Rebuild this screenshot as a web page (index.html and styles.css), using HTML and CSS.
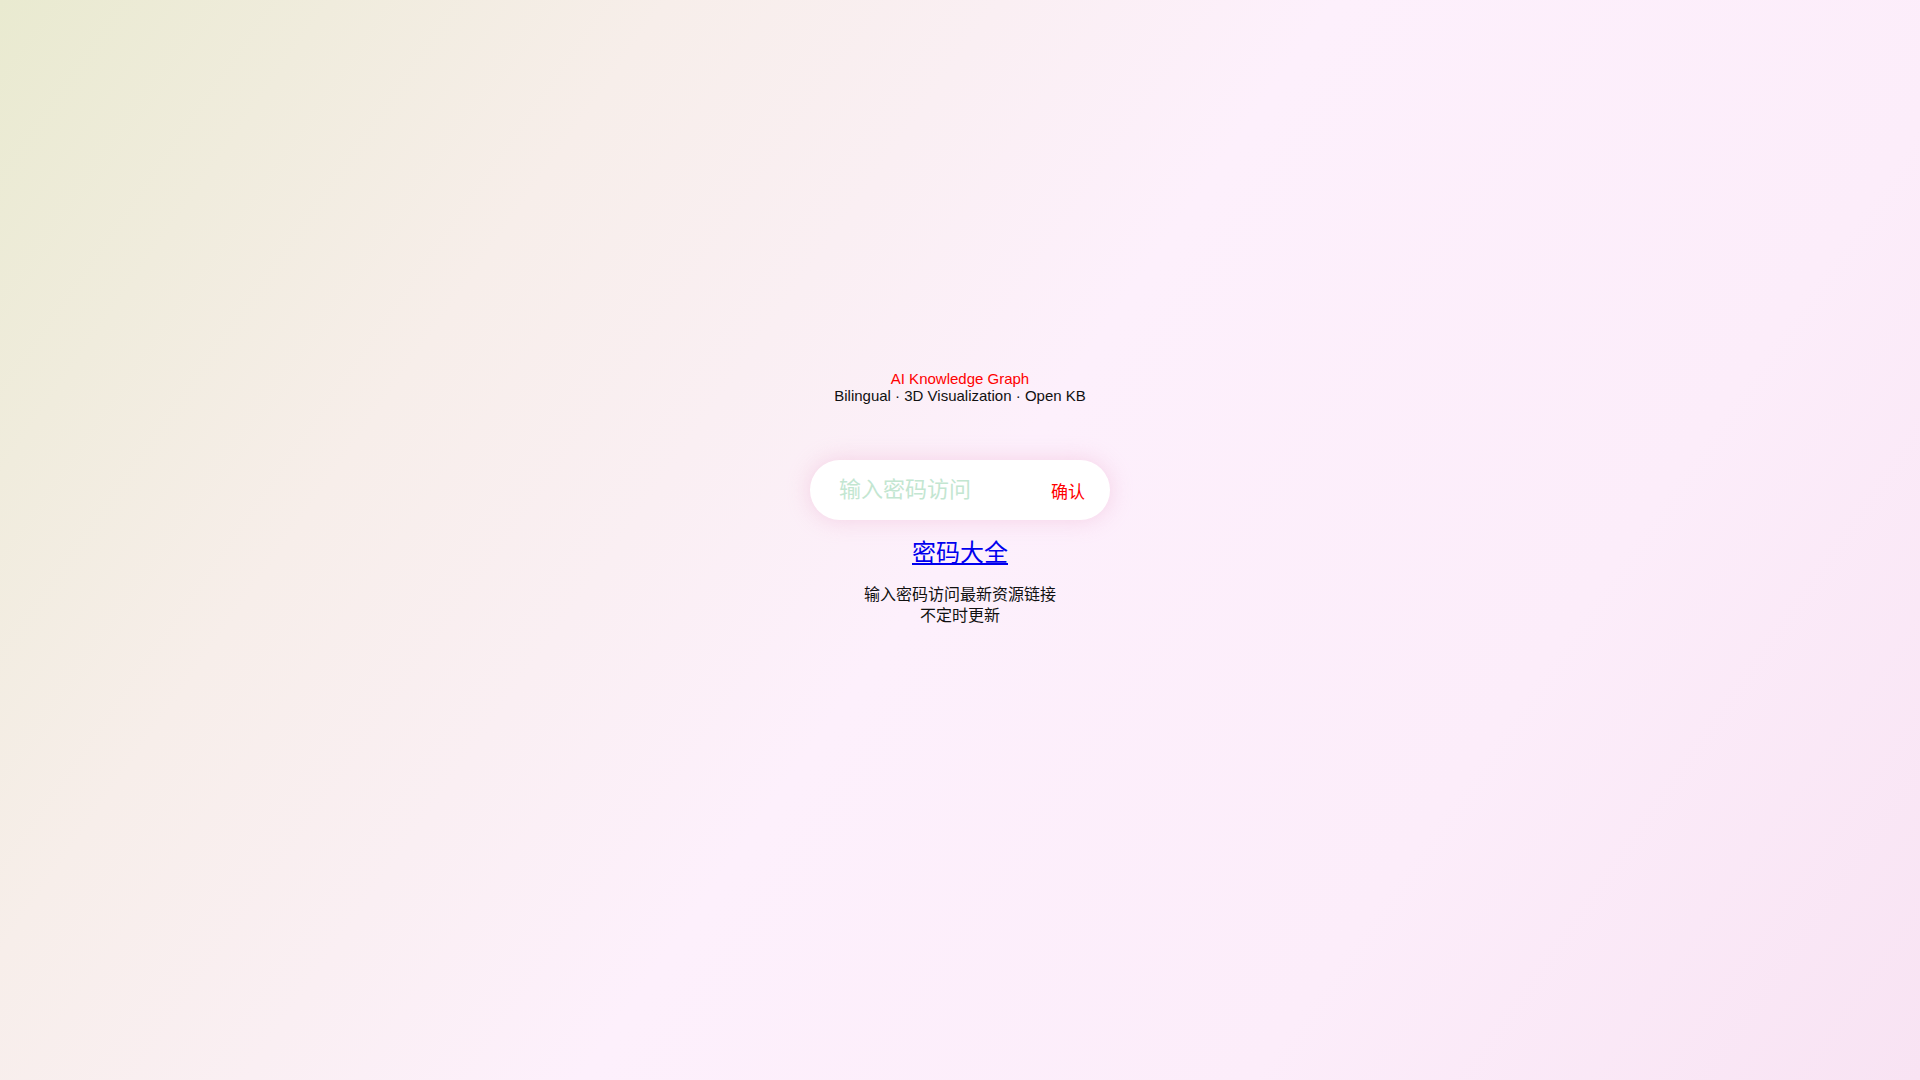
FILE: index.html
```html
<!DOCTYPE html>
<html lang="zh">
<head>
<meta charset="utf-8">
<title>AI Knowledge Graph</title>
<link rel="stylesheet" href="styles.css">
</head>
<body>
<main class="page">
  <div class="box">
    <div class="heading">
      <div class="title">AI Knowledge Graph</div>
      <div class="subtitle">Bilingual · 3D Visualization · Open KB</div>
    </div>
    <form class="pill" onsubmit="return false;">
      <input class="pw" type="password" placeholder="输入密码访问">
      <button class="ok" type="submit">确认</button>
    </form>
    <a class="link" href="#">密码大全</a>
    <p class="desc">输入密码访问最新资源链接<br>不定时更新</p>
  </div>
</main>
</body>
</html>
```

FILE: styles.css
```css
html, body {
  margin: 0;
  padding: 0;
  height: 100%;
}
body {
  font-family: "Liberation Sans", Arial, "Noto Sans CJK SC", sans-serif;
  background: linear-gradient(125deg, #e9ead0 0%, #f7eeea 25%, #fdf0fc 50%, #fcedfa 75%, #f8e3f3 100%);
  color: #000;
}
.page {
  height: 100%;
  display: flex;
  justify-content: center;
  align-items: flex-start;
}
.box {
  margin-top: 370px;
  display: flex;
  flex-direction: column;
  align-items: center;
  text-align: center;
}
.heading {
  font-size: 15px;
  line-height: 17px;
}
.title {
  color: #ff0000;
}
.subtitle {
  color: #111;
}
.pill {
  margin-top: 56px;
  width: 300px;
  height: 60px;
  box-sizing: border-box;
  background: #fff;
  border-radius: 30px;
  box-shadow: 0 0 22px rgba(238, 170, 205, 0.45);
  display: flex;
  align-items: center;
  padding: 0 25px 0 29px;
}
.pw {
  flex: 1;
  min-width: 0;
  border: none;
  outline: none;
  background: transparent;
  font-family: "Liberation Sans", Arial, "Noto Sans CJK SC", sans-serif;
  font-size: 22px;
  color: #333;
  padding: 0;
}
.pw::placeholder {
  color: #c3e6d1;
}
.ok {
  border: none;
  background: transparent;
  color: #ff0000;
  font-family: "Liberation Sans", Arial, "Noto Sans CJK SC", sans-serif;
  font-size: 17px;
  padding: 0;
  cursor: pointer;
}
.link {
  margin-top: 13px;
  font-size: 24px;
  color: #0000ee;
  text-decoration: underline;
}
.desc {
  margin: 16px 0 0;
  font-size: 16px;
  line-height: 21px;
  color: #111;
}
```
